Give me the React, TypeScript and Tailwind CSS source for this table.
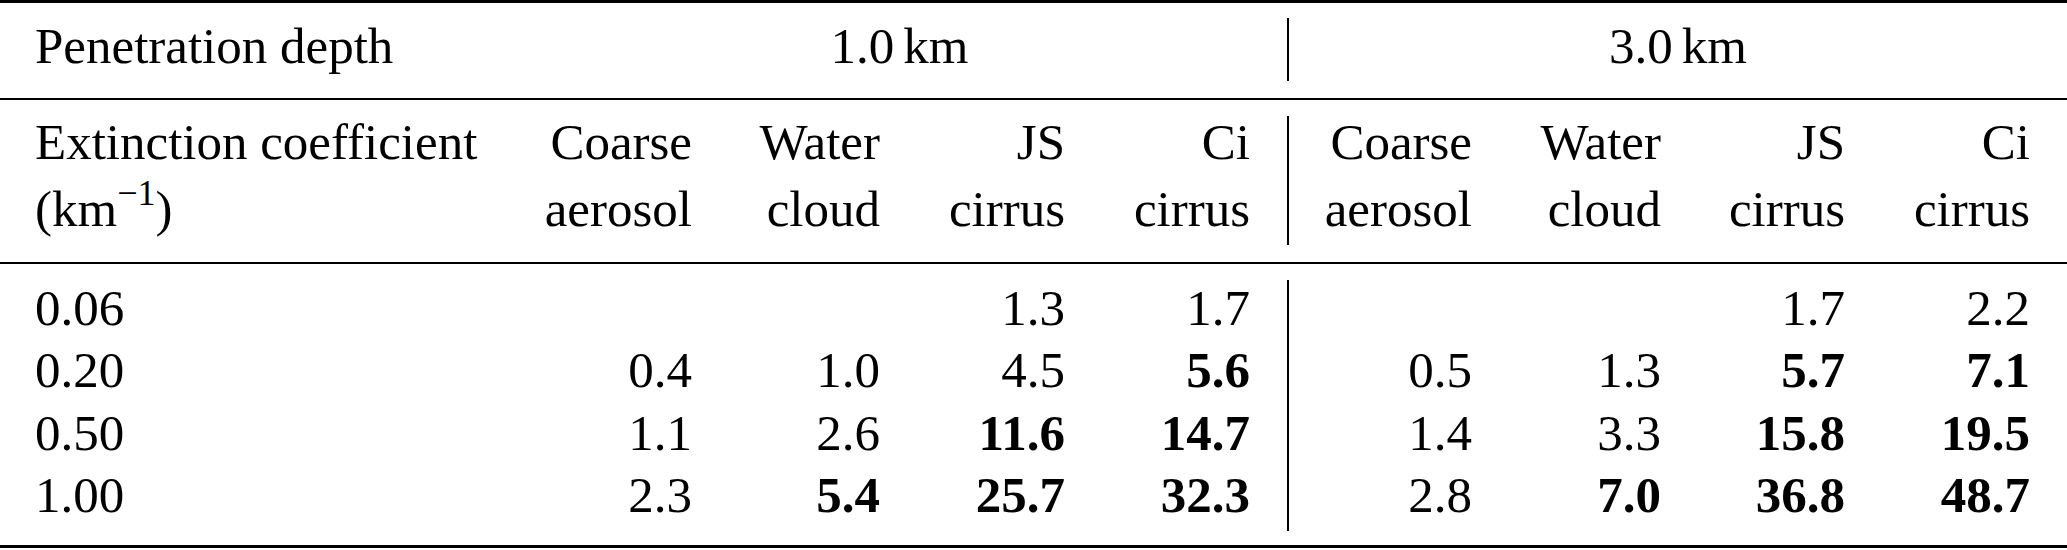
import React from 'react';

type Cell = { v: string; b?: boolean };

const heads = [
  ['Coarse', 'aerosol'],
  ['Water', 'cloud'],
  ['JS', 'cirrus'],
  ['Ci', 'cirrus'],
];

// column boxes, text is right-aligned against their right edge
const leftCols = ['w-[152px]', 'w-[188px]', 'w-[185px]', 'w-[185px]'];
const rightCols = ['w-[183px]', 'w-[189px]', 'w-[184px]', 'w-[185px]'];

const rows: { x: string; left: Cell[]; right: Cell[] }[] = [
  {
    x: '0.06',
    left: [{ v: '' }, { v: '' }, { v: '1.3' }, { v: '1.7' }],
    right: [{ v: '' }, { v: '' }, { v: '1.7' }, { v: '2.2' }],
  },
  {
    x: '0.20',
    left: [{ v: '0.4' }, { v: '1.0' }, { v: '4.5' }, { v: '5.6', b: true }],
    right: [{ v: '0.5' }, { v: '1.3' }, { v: '5.7', b: true }, { v: '7.1', b: true }],
  },
  {
    x: '0.50',
    left: [{ v: '1.1' }, { v: '2.6' }, { v: '11.6', b: true }, { v: '14.7', b: true }],
    right: [{ v: '1.4' }, { v: '3.3' }, { v: '15.8', b: true }, { v: '19.5', b: true }],
  },
  {
    x: '1.00',
    left: [{ v: '2.3' }, { v: '5.4', b: true }, { v: '25.7', b: true }, { v: '32.3', b: true }],
    right: [{ v: '2.8' }, { v: '7.0', b: true }, { v: '36.8', b: true }, { v: '48.7', b: true }],
  },
];

const DataCol = ({ width, side, idx }: { width: string; side: 'left' | 'right'; idx: number }) => (
  <div className={`${width} shrink-0 pt-[13px] text-right leading-[62.3px]`}>
    {rows.map((r) => {
      const c = r[side][idx];
      return (
        <div key={r.x} className={c.b ? 'font-bold' : ''}>
          {c.v || '\u00a0'}
        </div>
      );
    })}
  </div>
);

const HeadCol = ({ width, h }: { width: string; h: string[] }) => (
  <div className={`${width} shrink-0 pt-[9px] text-right leading-[67px]`}>
    <div>{h[0]}</div>
    <div>{h[1]}</div>
  </div>
);

export default function App() {
  return (
    <div className="w-[2067px] h-[550px] bg-white text-black font-['Liberation_Serif',serif] text-[51px]">
      {/* top rule */}
      <div className="h-[3px] bg-black" />

      {/* penetration depth row */}
      <div className="flex h-[95px] items-start">
        <div className="w-[512px] shrink-0 pl-[35px] pt-[12px] leading-[62.3px]">Penetration depth</div>
        <div className="w-[775px] shrink-0 pt-[12px] text-center leading-[62.3px]">
          1.0<span className="ml-[9px]">km</span>
        </div>
        <div className="mt-[15px] h-[63px] w-[2px] shrink-0 bg-black" />
        <div className="flex-1 pt-[12px] text-center leading-[62.3px]">
          3.0<span className="ml-[9px]">km</span>
        </div>
      </div>

      <div className="h-[2px] bg-black" />

      {/* column heads */}
      <div className="flex h-[162px] items-start">
        <div className="w-[540px] shrink-0 pl-[35px] pt-[9px] leading-[67px]">
          <div>Extinction coefficient</div>
          <div>
            (km<sup className="relative top-[-21px] text-[36px]">−1</sup>)
          </div>
        </div>
        {heads.map((h, i) => (
          <HeadCol key={'l' + i} width={leftCols[i]} h={h} />
        ))}
        <div className="w-[37px] shrink-0" />
        <div className="mt-[16px] h-[129px] w-[2px] shrink-0 bg-black" />
        {heads.map((h, i) => (
          <HeadCol key={'r' + i} width={rightCols[i]} h={h} />
        ))}
      </div>

      <div className="h-[2px] bg-black" />

      {/* values */}
      <div className="flex h-[281px] items-start">
        <div className="w-[540px] shrink-0 pl-[35px] pt-[13px] leading-[62.3px]">
          {rows.map((r) => (
            <div key={r.x}>{r.x}</div>
          ))}
        </div>
        {leftCols.map((w, i) => (
          <DataCol key={'l' + i} width={w} side="left" idx={i} />
        ))}
        <div className="w-[37px] shrink-0" />
        <div className="mt-[16px] h-[251px] w-[2px] shrink-0 bg-black" />
        {rightCols.map((w, i) => (
          <DataCol key={'r' + i} width={w} side="right" idx={i} />
        ))}
      </div>

      {/* bottom rule */}
      <div className="h-[3px] bg-black" />
    </div>
  );
}
